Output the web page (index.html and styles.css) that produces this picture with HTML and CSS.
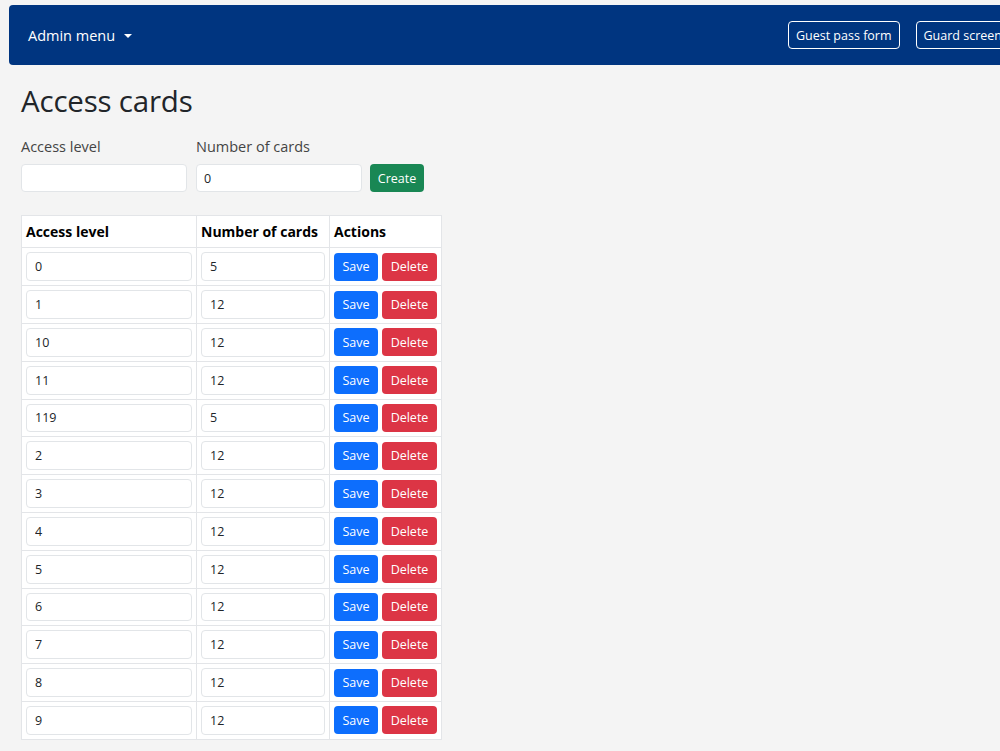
FILE: index.html
```html
<!DOCTYPE html>
<html lang="en">
<head>
<meta charset="utf-8">
<title>Access cards</title>
<link rel="stylesheet" href="styles.css">
</head>
<body>
<nav class="navbar">
  <a class="brand-toggle" href="#">Admin menu <span class="caret"></span></a>
  <div class="nav-actions">
    <a class="btn-outline" href="#">Guest pass form</a>
    <a class="btn-outline" href="#">Guard screen</a>
  </div>
</nav>
<main class="content">
  <h1 class="title">Access cards</h1>
  <form class="create-form">
    <div class="field">
      <label class="field-label">Access level</label>
      <input class="form-input" type="text" value="">
    </div>
    <div class="field">
      <label class="field-label">Number of cards</label>
      <input class="form-input" type="text" value="0">
    </div>
    <button class="btn btn-green" type="button">Create</button>
  </form>
  <table class="cards-table">
    <thead>
      <tr><th class="col-level">Access level</th><th class="col-num">Number of cards</th><th class="col-act">Actions</th></tr>
    </thead>
    <tbody>
      <tr><td><input class="cell-input" value="0"></td><td><input class="cell-input" value="5"></td><td class="actions"><button class="btn btn-blue">Save</button><button class="btn btn-red">Delete</button></td></tr>
      <tr><td><input class="cell-input" value="1"></td><td><input class="cell-input" value="12"></td><td class="actions"><button class="btn btn-blue">Save</button><button class="btn btn-red">Delete</button></td></tr>
      <tr><td><input class="cell-input" value="10"></td><td><input class="cell-input" value="12"></td><td class="actions"><button class="btn btn-blue">Save</button><button class="btn btn-red">Delete</button></td></tr>
      <tr><td><input class="cell-input" value="11"></td><td><input class="cell-input" value="12"></td><td class="actions"><button class="btn btn-blue">Save</button><button class="btn btn-red">Delete</button></td></tr>
      <tr><td><input class="cell-input" value="119"></td><td><input class="cell-input" value="5"></td><td class="actions"><button class="btn btn-blue">Save</button><button class="btn btn-red">Delete</button></td></tr>
      <tr><td><input class="cell-input" value="2"></td><td><input class="cell-input" value="12"></td><td class="actions"><button class="btn btn-blue">Save</button><button class="btn btn-red">Delete</button></td></tr>
      <tr><td><input class="cell-input" value="3"></td><td><input class="cell-input" value="12"></td><td class="actions"><button class="btn btn-blue">Save</button><button class="btn btn-red">Delete</button></td></tr>
      <tr><td><input class="cell-input" value="4"></td><td><input class="cell-input" value="12"></td><td class="actions"><button class="btn btn-blue">Save</button><button class="btn btn-red">Delete</button></td></tr>
      <tr><td><input class="cell-input" value="5"></td><td><input class="cell-input" value="12"></td><td class="actions"><button class="btn btn-blue">Save</button><button class="btn btn-red">Delete</button></td></tr>
      <tr><td><input class="cell-input" value="6"></td><td><input class="cell-input" value="12"></td><td class="actions"><button class="btn btn-blue">Save</button><button class="btn btn-red">Delete</button></td></tr>
      <tr><td><input class="cell-input" value="7"></td><td><input class="cell-input" value="12"></td><td class="actions"><button class="btn btn-blue">Save</button><button class="btn btn-red">Delete</button></td></tr>
      <tr><td><input class="cell-input" value="8"></td><td><input class="cell-input" value="12"></td><td class="actions"><button class="btn btn-blue">Save</button><button class="btn btn-red">Delete</button></td></tr>
      <tr><td><input class="cell-input" value="9"></td><td><input class="cell-input" value="12"></td><td class="actions"><button class="btn btn-blue">Save</button><button class="btn btn-red">Delete</button></td></tr>
    </tbody>
  </table>
</main>
</body>
</html>
```

FILE: styles.css
```css
html {
  overflow: hidden;
}
body {
  margin: 0;
  background: #f4f4f4;
  font-family: "Open Sans", "Noto Sans", sans-serif;
  color: #212529;
  font-size: 13px;
}
.navbar {
  margin: 5px 0 0 9px;
  width: 1017px;
  height: 60px;
  box-sizing: border-box;
  background: #003580;
  border-radius: 4px;
  display: flex;
  align-items: center;
  justify-content: space-between;
  padding: 0 16px 0 19px;
}
.brand-toggle {
  color: #fff;
  text-decoration: none;
  font-size: 14.5px;
  display: flex;
  align-items: center;
  gap: 8px;
  margin-top: 1px;
}
.caret {
  width: 0;
  height: 0;
  border-left: 4px solid transparent;
  border-right: 4px solid transparent;
  border-top: 4px solid #fff;
  margin-left: 1px;
}
.nav-actions {
  display: flex;
  gap: 16px;
}
.btn-outline {
  display: flex;
  align-items: center;
  justify-content: center;
  height: 28px;
  box-sizing: border-box;
  padding: 0 7px;
  border: 1px solid #fff;
  border-radius: 4px;
  color: #fff;
  text-decoration: none;
  font-size: 12.5px;
}
.content {
  padding: 0 0 0 21px;
}
.title {
  font-size: 29.5px;
  font-weight: 500;
  margin: 18px 0 20px;
  line-height: 1.2;
  letter-spacing: -0.2px;
}
.create-form {
  display: flex;
  align-items: flex-end;
  gap: 9px;
  margin-bottom: 23px;
}
.field {
  display: flex;
  flex-direction: column;
}
.field-label {
  font-size: 14.5px;
  color: #444;
  margin-bottom: 9px;
  line-height: 17px;
}
.form-input {
  width: 166px;
  height: 28px;
  box-sizing: border-box;
  border: 1px solid #e2e5e8;
  border-radius: 4px;
  background: #fff;
  font-family: inherit;
  font-size: 12.5px;
  color: #212529;
  padding: 0 7px;
  outline: none;
}
.btn {
  height: 28px;
  box-sizing: border-box;
  border: none;
  border-radius: 4px;
  color: #fff;
  font-family: inherit;
  font-size: 12.5px;
  padding: 0;
  cursor: pointer;
}
.btn-green {
  background: #198754;
  width: 54px;
  margin-left: -1px;
}
.btn-blue {
  background: #0d6efd;
  width: 44px;
}
.btn-red {
  background: #dc3545;
  width: 55px;
}
.cards-table {
  border-collapse: collapse;
  background: #fff;
}
.cards-table th,
.cards-table td {
  border: 1px solid #e3e5e8;
  padding: 4px;
  vertical-align: middle;
}
.cards-table th {
  text-align: left;
  font-size: 14px;
  font-weight: 700;
  height: 23px;
  color: #000;
}
.col-level { width: 166px; }
.col-num { width: 124px; }
.col-act { width: 103px; }
.cell-input {
  display: block;
  width: 100%;
  height: 28.8px;
  box-sizing: border-box;
  border: 1px solid #e2e5e8;
  border-radius: 4px;
  background: #fff;
  font-family: inherit;
  font-size: 12.5px;
  color: #212529;
  padding: 0 8px;
  outline: none;
}
.actions {
  white-space: nowrap;
}
.actions .btn {
  vertical-align: middle;
}
.actions .btn + .btn {
  margin-left: 4px;
}
```
